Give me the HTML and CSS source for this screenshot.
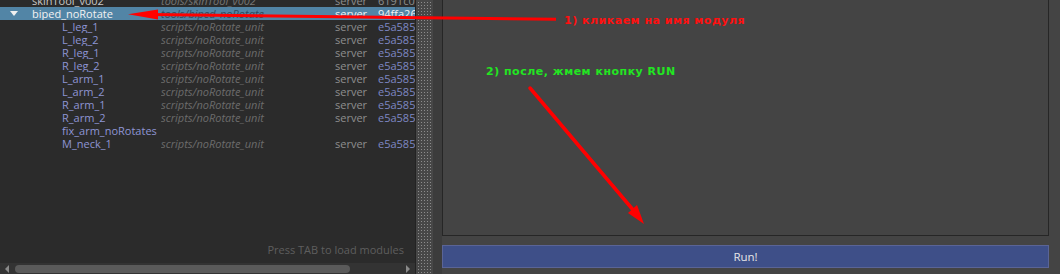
FILE: index.html
```html
<!DOCTYPE html>
<html>
<head>
<meta charset="utf-8">
<link rel="stylesheet" href="styles.css">
</head>
<body>
<div class="app">
  <div class="left">
    <div class="tree">
      <div class="rows">
        <div class="row top"><span class="name"><span class="sp"></span>skinTool_v002</span><span class="path">tools/skinTool_v002</span><span class="srv">server</span><span class="hash">6191c0a4</span></div>
        <div class="row top sel"><span class="name"><span class="tri"></span>biped_noRotate</span><span class="path">tools/biped_noRotate</span><span class="srv">server</span><span class="hash">94ffa26b</span></div>
        <div class="row child"><span class="name">L_leg_1</span><span class="path">scripts/noRotate_unit</span><span class="srv">server</span><span class="hash">e5a5851c</span></div>
        <div class="row child"><span class="name">L_leg_2</span><span class="path">scripts/noRotate_unit</span><span class="srv">server</span><span class="hash">e5a5851c</span></div>
        <div class="row child"><span class="name">R_leg_1</span><span class="path">scripts/noRotate_unit</span><span class="srv">server</span><span class="hash">e5a5851c</span></div>
        <div class="row child"><span class="name">R_leg_2</span><span class="path">scripts/noRotate_unit</span><span class="srv">server</span><span class="hash">e5a5851c</span></div>
        <div class="row child"><span class="name">L_arm_1</span><span class="path">scripts/noRotate_unit</span><span class="srv">server</span><span class="hash">e5a5851c</span></div>
        <div class="row child"><span class="name">L_arm_2</span><span class="path">scripts/noRotate_unit</span><span class="srv">server</span><span class="hash">e5a5851c</span></div>
        <div class="row child"><span class="name">R_arm_1</span><span class="path">scripts/noRotate_unit</span><span class="srv">server</span><span class="hash">e5a5851c</span></div>
        <div class="row child"><span class="name">R_arm_2</span><span class="path">scripts/noRotate_unit</span><span class="srv">server</span><span class="hash">e5a5851c</span></div>
        <div class="row child"><span class="name">fix_arm_noRotates</span><span class="path"></span><span class="srv"></span><span class="hash"></span></div>
        <div class="row child"><span class="name">M_neck_1</span><span class="path">scripts/noRotate_unit</span><span class="srv">server</span><span class="hash">e5a5851c</span></div>
      </div>
      <div class="hint">Press TAB to load modules</div>
    </div>
    <div class="hscroll">
      <span class="arr l"></span>
      <span class="thumb"></span>
      <span class="arr r"></span>
    </div>
  </div>
  <div class="splitter"><div class="dots"></div></div>
  <div class="right">
    <div class="output"></div>
    <button class="run">Run!</button>
  </div>
</div>
<div class="overlay">
  <svg class="arrows" width="1060" height="274" viewBox="0 0 1060 274">
    <line x1="150" y1="14.6" x2="556" y2="19.2" stroke="#ff0000" stroke-width="3"/>
    <polygon points="128,14.3 158,9.6 158,19.6" fill="#ff0000"/>
    <line x1="530" y1="88" x2="634" y2="211" stroke="#ff0000" stroke-width="3.5" stroke-linecap="round"/>
    <polygon points="644,224 628,213 637,205" fill="#ff0000"/>
  </svg>
  <div class="note red">1) кликаем на имя модуля</div>
  <div class="note green">2) после, жмем кнопку RUN</div>
</div>
</body>
</html>
```

FILE: styles.css
```css
* { box-sizing: border-box; }
html, body {
  margin: 0;
  padding: 0;
  width: 1060px;
  height: 274px;
  overflow: hidden;
  background: #444444;
  font-family: "Open Sans", "DejaVu Sans", sans-serif;
  font-size: 11px;
}
.app {
  display: flex;
  width: 1060px;
  height: 274px;
}
.left {
  width: 416px;
  flex: none;
  display: flex;
  flex-direction: column;
  background: #2b2b2b;
  border-right: 1px solid #232323;
}
.tree {
  flex: 1;
  display: flex;
  flex-direction: column;
  overflow: hidden;
}
.rows {
  margin-top: -6px;
}
.row {
  display: grid;
  grid-template-columns: 161px 174px 43px 1fr;
  height: 13px;
  line-height: 13px;
  white-space: nowrap;
  overflow: hidden;
}
.row > span { overflow: hidden; }
.name { display: flex; align-items: center; }
.top .name { padding-left: 10px; color: #c8c8c8; }
.child .name { padding-left: 62px; color: #8e95d4; }
.sp { width: 8px; margin-right: 14px; }
.tri {
  width: 0; height: 0;
  border-left: 4px solid transparent;
  border-right: 4px solid transparent;
  border-top: 5px solid #f0f0f0;
  margin-right: 14px;
}
.path { font-style: italic; color: #6c6c6c; }
.srv { color: #8e8e8e; }
.hash { color: #7e88c4; }
.top .path { color: #767676; }
.top .srv { color: #8e8e8e; }
.top .hash { color: #8e8e8e; }
.sel { background: #5285a6; }
.sel .name, .sel .srv, .sel .hash { color: #f2f2f2; }
.sel .path { color: #2e4a5e; }
.hint {
  margin-top: auto;
  text-align: right;
  padding-right: 11px;
  padding-bottom: 6px;
  color: #5e5e5e;
  line-height: 14px;
}
.hscroll {
  height: 11px;
  flex: none;
  background: #333333;
  display: flex;
  align-items: center;
  padding: 0 5px;
  gap: 6px;
}
.arr { width: 0; height: 0; border-top: 4px solid transparent; border-bottom: 4px solid transparent; }
.arr.l { border-right: 4px solid #8a8a8a; }
.arr.r { border-left: 4px solid #8a8a8a; margin-left: auto; }
.thumb {
  width: 335px;
  height: 8px;
  border-radius: 4px;
  background: #5a5a5a;
}
.splitter {
  width: 26px;
  flex: none;
  background: #3c3c3c;
  display: flex;
}
.dots {
  width: 17px;
  background-color: #474747;
  background-image:
    linear-gradient(to right, #474747 2px, transparent 2px),
    linear-gradient(to bottom, #474747 2px, #8c8c8c 2px);
  background-size: 3px 3px;
}
.right {
  flex: 1;
  display: flex;
  flex-direction: column;
  padding: 0 11px 6px 0;
  gap: 9px;
}
.output {
  flex: 1;
  margin-top: -2px;
  border: 1px solid #262626;
  background: #444444;
}
.run {
  height: 23px;
  flex: none;
  background: #3e4f88;
  border: 1px solid #5a6496;
  color: #e6e6e6;
  font-family: "Open Sans", "DejaVu Sans", sans-serif;
  font-size: 11.5px;
  padding: 0;
}
.overlay {
  position: absolute;
  left: 0; top: 0;
  width: 1060px; height: 274px;
  pointer-events: none;
}
.arrows { position: absolute; left: 0; top: 0; }
.note {
  position: absolute;
  font-family: "DejaVu Sans", sans-serif;
  font-weight: bold;
  font-size: 11px;
  line-height: 14px;
  white-space: nowrap;
  -webkit-font-smoothing: none;
}
.note.red { color: #ff1010; left: 564px; top: 14px; letter-spacing: 0.5px; }
.note.green { color: #22e622; left: 486px; top: 65px; letter-spacing: 0.5px; }
```
